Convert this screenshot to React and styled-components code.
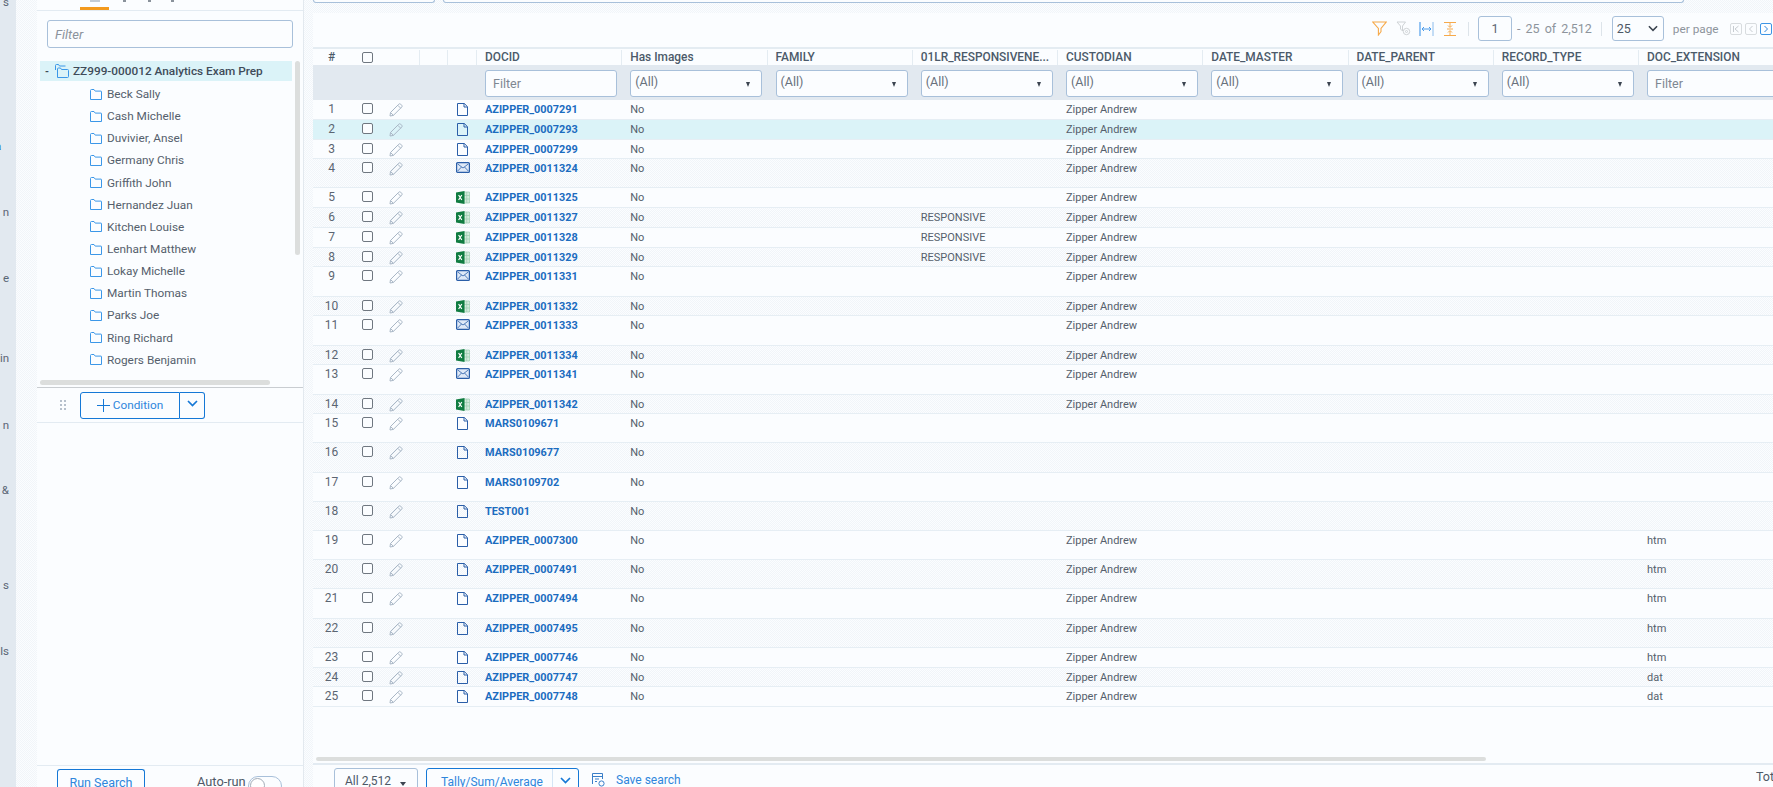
import React from 'react';
import styled, { createGlobalStyle, css } from 'styled-components';

const dither = css`
  background-color: #f7fafc;
  background-image: repeating-conic-gradient(#fbfdff 0 25%, #f1f5f9 0 50%);
  background-size: 2px 2px;
`;

const Global = createGlobalStyle`
  html, body { margin: 0; padding: 0; height: 787px; overflow: hidden; }
  body { font-family: Roboto, "Liberation Sans", sans-serif; color: #4d5866; }
  * { box-sizing: border-box; }
`;

const Page = styled.div`
  ${dither}
  display: flex;
  width: 1773px;
  height: 787px;
  overflow: hidden;
`;

/* ---------- left rail ---------- */
const Rail = styled.nav`
  width: 16px;
  flex: none;
  background: #e2e9f0;
  font-size: 11.5px;
  line-height: 14px;
  overflow: hidden;
`;
const RailLabel = styled.div`
  margin-top: ${p => p.$gap}px;
  width: 9px;
  text-align: ${p => (p.$accent ? 'left' : 'right')};
  text-indent: ${p => (p.$accent ? -5 : 0)}px;
  white-space: nowrap;
  color: ${p => (p.$accent ? '#2b6cb8' : '#5a6675')};
`;

/* ---------- search panel ---------- */
const SearchPanel = styled.aside`
  width: 267px;
  margin-left: 21px;
  flex: none;
  background: #fbfdff;
  border-right: 1px solid #e3e9ef;
  display: flex;
  flex-direction: column;
  overflow: hidden;
`;
const TabStrip = styled.div`
  height: 11px;
  flex: none;
  border-bottom: 1px solid #e3ebf2;
  display: flex;
  padding-left: 43px;
`;
const ActiveTab = styled.div`
  width: 29px;
  height: 10px;
  border-bottom: 3px solid #f39a1e;
  display: flex;
  justify-content: center;
`;
const TabGlyph = styled.span`
  display: block;
  width: ${p => p.$w}px;
  height: 2px;
  margin-left: ${p => p.$ml || 0}px;
  background: ${p => p.$c || '#c3ccd5'};
`;
const FilterWrap = styled.div`
  padding: 9px 10px 13px 10px;
  flex: none;
`;
const TreeFilter = styled.input`
  display: block;
  width: 246px;
  height: 28px;
  border: 1px solid #a8c0da;
  border-radius: 3px;
  background: #fbfdff;
  padding: 0 7px;
  font: italic 13px Roboto, sans-serif;
  &::placeholder { color: #8b939c; opacity: 1; }
`;
const Tree = styled.div`
  position: relative;
  height: 326px;
  flex: none;
  padding-left: 3px;
`;
const RootNode = styled.div`
  display: flex;
  align-items: center;
  width: 252px;
  height: 20px;
  background: #dbf3f8;
  font-size: 11.8px;
  font-weight: 500;
  color: #3f4b59;
  padding-left: 5px;
`;
const Minus = styled.span`
  width: 10px;
  font-weight: 700;
  font-size: 10px;
`;
const RootLabel = styled.span`
  margin-left: 4px;
  white-space: nowrap;
`;
const TreeList = styled.div`
  padding: 2px 0 0 50px;
`;
const TreeNode = styled.div`
  display: flex;
  align-items: center;
  gap: 5px;
  height: 22.15px;
  font-size: 11.8px;
  color: #555f6c;
`;
const VScroll = styled.div`
  position: absolute;
  left: 258px;
  top: 0;
  width: 5px;
  height: 194px;
  border-radius: 3px;
  background: #dcdedd;
`;
const HScroll = styled.div`
  position: absolute;
  left: 3px;
  top: 319px;
  width: 230px;
  height: 5px;
  border-radius: 3px;
  background: #dcdedd;
`;
const ConditionBar = styled.div`
  flex: none;
  height: 36px;
  border-top: 1px solid #c9cdd1;
  border-bottom: 1px solid #e3ebf2;
  display: flex;
  align-items: center;
  padding-left: 22px;
`;
const Grip = styled.div`
  width: 7px;
  height: 12px;
  margin-right: 14px;
  background-image: radial-gradient(circle, #b6c0cc 1.2px, transparent 1.3px);
  background-size: 4px 4px;
`;
const ConditionBtn = styled.button`
  width: 100px;
  height: 27px;
  display: flex;
  align-items: center;
  justify-content: center;
  gap: 3px;
  background: #fbfdff;
  border: 1px solid #1578d6;
  border-radius: 3px 0 0 3px;
  color: #2f86dc;
  font: 11.8px Roboto, sans-serif;
  padding: 0;
`;
const CaretBtn = styled.button`
  width: 25px;
  height: 27px;
  display: flex;
  align-items: center;
  justify-content: center;
  background: #fbfdff;
  border: 1px solid #1578d6;
  border-left: 0;
  border-radius: 0 3px 3px 0;
  padding: 0 0 3px;
`;
const PanelSpacer = styled.div`
  flex: 1;
`;
const PanelFooter = styled.div`
  flex: none;
  height: 22px;
  border-top: 1px solid #e3ebf2;
  display: flex;
  padding: 3px 0 0 20px;
`;
const RunBtn = styled.button`
  width: 88px;
  height: 30px;
  flex: none;
  background: #fbfdff;
  border: 1px solid #1578d6;
  border-bottom-width: 0;
  border-radius: 3px 3px 0 0;
  color: #2f86dc;
  font: 12.5px Roboto, sans-serif;
  padding: 0 0 5px;
`;
const AutoRun = styled.span`
  margin: 5px 0 0 52px;
  font-size: 12.8px;
  white-space: nowrap;
`;
const Toggle = styled.span`
  display: block;
  width: 34px;
  height: 20px;
  margin: 7px 0 0 2px;
  flex: none;
  border: 1px solid #a8c0da;
  border-radius: 10px;
  position: relative;
  &::after {
    content: '';
    position: absolute;
    left: 1px;
    top: 1px;
    width: 13px;
    height: 13px;
    border: 1px solid #a3adb8;
    border-radius: 50%;
    background: #fff;
  }
`;

/* ---------- main ---------- */
const Main = styled.main`
  flex: none;
  width: 1460px;
  margin-left: 9px;
  display: flex;
  flex-direction: column;
`;
const TopInputs = styled.div`
  height: 13px;
  flex: none;
  display: flex;
  gap: 8px;
`;
const CroppedInput = styled.div`
  height: 3px;
  width: ${p => p.$w}px;
  border: 1px solid #a8c0da;
  border-top: 0;
  border-radius: 0 0 3px 3px;
  background: #fbfdff;
`;
const Results = styled.section`
  flex: 1;
  min-height: 0;
  background: #fbfdff;
  display: flex;
  flex-direction: column;
  overflow: hidden;
`;
const Toolbar = styled.div`
  height: 34px;
  flex: none;
  display: flex;
  align-items: center;
  padding: 0 0 3px 1055px;
  white-space: nowrap;
  overflow: hidden;
`;
const ToolIcon = styled.span`
  display: flex;
  flex: none;
  width: 23.5px;
  justify-content: center;
`;
const Divider = styled.span`
  width: 1px;
  height: 14px;
  flex: none;
  background: #dde4ea;
  margin: ${p => p.$m};
`;
const PageInput = styled.div`
  width: 34px;
  height: 25px;
  border: 1px solid #a8c0da;
  border-radius: 3px;
  text-align: center;
  line-height: 23px;
  font-size: 12.5px;
  color: #5c6673;
  flex: none;
`;
const PagerText = styled.span`
  flex: none;
  font-size: ${p => p.$size || 12.5}px;
  color: #8d949c;
  margin: ${p => p.$m || '0'};
  word-spacing: ${p => (p.$tight ? 0 : 2)}px;
`;
const PerPage = styled.div`
  width: 52px;
  height: 25px;
  border: 1px solid #a8c0da;
  border-radius: 3px;
  display: flex;
  align-items: center;
  justify-content: space-between;
  padding: 0 5px 0 4px;
  font-size: 12.5px;
  color: #4d5866;
  flex: none;
`;
const PageBtn = styled.span`
  width: 12px;
  height: 12px;
  margin-left: ${p => p.$ml}px;
  flex: none;
  border: 1px solid ${p => (p.$on ? '#3c95e6' : '#d8dcdf')};
  border-radius: 2px;
  display: flex;
  align-items: center;
  justify-content: center;
`;

const Table = styled.div`
  flex: 1;
  min-height: 0;
  width: 1460px;
  overflow: hidden;
  border-top: 2px solid #e4ecf2;
`;
const cols = (a, b, c, d, e) => `${a}px ${b}px ${c}px ${d}px ${e}px repeat(9, 145.25px)`;
const HeadRow = styled.div`
  display: grid;
  grid-template-columns: ${cols(37, 34, 36, 28, 29)};
  height: 16px;
  font-size: 11.9px;
  font-weight: 500;
  color: #4b5a6a;
  line-height: 15px;
  padding-top: 1px;
`;
const HeadCell = styled.div`
  padding-left: ${p => (p.$center || p.$box ? 0 : 8)}px;
  text-align: ${p => (p.$center ? 'center' : 'left')};
  border-right: ${p => (p.$sep ? '1px solid #e4ecf2' : '0')};
  white-space: nowrap;
  overflow: hidden;
  display: ${p => (p.$box ? 'flex' : 'block')};
  align-items: center;
  justify-content: center;
`;
const FilterRow = styled.div`
  display: grid;
  grid-template-columns: 164px repeat(9, 145.25px);
  height: 35px;
  background: #e2e9f0;
  align-items: start;
  padding-top: 5px;
`;
const controlBox = css`
  width: 132px;
  height: 27px;
  margin-left: 8px;
  border: 1px solid #a8c0da;
  border-radius: 3px;
  background: #fbfdff;
  font-size: 12.5px;
`;
const FilterInput = styled.input`
  ${controlBox}
  display: block;
  padding: 0 7px;
  font-family: Roboto, sans-serif;
  &::placeholder { color: #7e8791; opacity: 1; }
`;
const FilterSelect = styled.div`
  ${controlBox}
  position: relative;
  padding: 0 4px;
  line-height: 22px;
  color: #68717c;
  &::after {
    content: '';
    position: absolute;
    right: 11px;
    top: 11px;
    border-left: 2.5px solid transparent;
    border-right: 2.5px solid transparent;
    border-top: 5px solid #3b4450;
  }
`;
const Row = styled.div`
  display: grid;
  grid-template-columns: ${cols(37, 34, 24, 40, 29)};
  height: ${p => (p.$tall ? 29.2 : 19.75)}px;
  border-bottom: 1px solid #e6eef4;
  font-size: 11px;
  line-height: 19.5px;
  color: #555f6c;
  ${p => (p.$selected ? 'background: #dbf3f8;' : p.$even ? dither : 'background: #fbfdff;')}
`;
const NumCell = styled.div`
  text-align: center;
  font-size: 12px;
  line-height: 18px;
  color: #5b6572;
`;
const IconCell = styled.div`
  display: flex;
  justify-content: center;
  align-items: flex-start;
  padding-top: 3px;
`;
const DataCell = styled.div`
  padding-left: 8px;
  white-space: nowrap;
`;
const DocLink = styled(DataCell)`
  font-weight: 700;
  color: #1b6cbf;
  font-size: 10.9px;
`;
const RowCheck = styled.span`
  display: block;
  width: 11px;
  height: 11px;
  border: 1px solid #6f7780;
  border-radius: 2px;
  background: #fbfdff;
`;
const HBar = styled.div`
  height: 4px;
  flex: none;
  width: 1170px;
  margin: 0 0 2px 3px;
  border-radius: 2px;
  background: #dcdedd;
`;
const ResultsFooter = styled.div`
  flex: none;
  height: 24px;
  border-top: 2px solid #e3ebf2;
  display: flex;
  align-items: flex-start;
  padding: 3px 0 0 21px;
  overflow: hidden;
  position: relative;
`;
const AllBtn = styled.div`
  width: 84px;
  height: 28px;
  flex: none;
  border: 1px solid #a8c0da;
  border-radius: 3px;
  display: flex;
  padding: 5px 0 0 10px;
  font-size: 12px;
  color: #4d5866;
  white-space: nowrap;
`;
const Triangle = styled.span`
  margin: 8px 0 0 9px;
  border-left: 3.5px solid transparent;
  border-right: 3.5px solid transparent;
  border-top: 4px solid #3b4450;
  height: 0;
`;
const TallyBtn = styled.div`
  width: 153px;
  height: 28px;
  flex: none;
  margin-left: 8px;
  border: 1px solid #1578d6;
  border-radius: 3px;
  display: flex;
  font-size: 12px;
  color: #2f86dc;
`;
const TallyLabel = styled.span`
  flex: 1;
  padding: 6px 0 0 14px;
  white-space: nowrap;
`;
const TallyCaret = styled.span`
  width: 26px;
  flex: none;
  display: flex;
  justify-content: center;
  padding-top: 8px;
  border-left: 1px solid #d4e5f5;
`;
const SaveLink = styled.div`
  display: flex;
  margin-left: 13px;
  gap: 11px;
  font-size: 12px;
  color: #2f86dc;
  padding-top: 5px;
  white-space: nowrap;
`;
const TotalLabel = styled.span`
  position: absolute;
  left: 1443px;
  top: 4px;
  font-size: 12.5px;
  color: #4d5866;
`;

/* ---------- drawings ---------- */
const FolderIcon = () => (
  <svg width="12" height="11" viewBox="0 0 12 11" fill="none" stroke="#3b97e8" strokeWidth="1">
    <path d="M.5 10.5V1.5a1 1 0 0 1 1-1h2.5l1.2 1.6h5.8a.5.5 0 0 1 .5.5v7.9z" />
  </svg>
);
const RootFolder = () => (
  <svg width="14" height="14" viewBox="0 0 14 14" fill="none" stroke="#3b97e8" strokeWidth="1">
    <path d="M.5 6V1.5a1 1 0 0 1 1-1h2l1 1.5h6" />
    <path d="M2.5 13.5V5a1 1 0 0 1 1-1h2l1 1.5h6a1 1 0 0 1 1 1v6a1 1 0 0 1-1 1z" />
  </svg>
);
const Pencil = () => (
  <svg width="14" height="14" viewBox="0 0 14 14" fill="none" stroke="#a9b7c6" strokeWidth="1">
    <path d="M1.5 9.5 9.8 1.2a1.3 1.3 0 0 1 1.9 0l1 1a1.3 1.3 0 0 1 0 1.9L4.4 12.4 1 13z" />
    <path d="M1.5 9.5l3 2.9M8.8 2.3l2.9 2.9" />
  </svg>
);
const DocIcon = () => (
  <svg width="11" height="13" viewBox="0 0 11 13" fill="none" stroke="#2a5ea8" strokeWidth="1">
    <path d="M.5.5h6.8l3.2 3.2v8.8H.5z" />
    <path d="M7 .5v3.5h3.5" />
  </svg>
);
const MailIcon = () => (
  <svg width="14" height="11" viewBox="0 0 14 11" fill="#dfe9f7" stroke="#2a5ea8">
    <rect x=".6" y=".6" width="12.8" height="9.8" rx="1" strokeWidth="1.2" />
    <path d="M1.5 1.8 7 6l5.5-4.2M1.5 9.2 5.5 5M12.5 9.2 8.5 5" fill="none" strokeWidth=".8" />
  </svg>
);
const ExcelIcon = () => (
  <svg width="14" height="13" viewBox="0 0 14 13">
    <path d="M8 1h5.5v11H8z" fill="#d4ebdd" stroke="#9ccdb0" strokeWidth=".7" />
    <path d="M8 4.5h5.5M8 8h5.5M10.7 1v11" stroke="#9ccdb0" strokeWidth=".7" />
    <path d="M0 1.4 8.5 0v13L0 11.6z" fill="#107c41" />
    <path d="M2.6 4 5.8 9M5.8 4 2.6 9" stroke="#fff" strokeWidth="1.2" />
  </svg>
);
const Chevron = ({ color = '#1578d6', w = 11 }) => (
  <svg width={w} height="7" viewBox="0 0 11 7" fill="none" stroke={color} strokeWidth="1.7">
    <path d="M1 1l4.5 4.5L10 1" />
  </svg>
);
const Plus = () => (
  <svg width="13" height="13" viewBox="0 0 13 13" stroke="#1578d6" strokeWidth="1">
    <path d="M6.5 0v13M0 6.5h13" />
  </svg>
);
const FunnelOn = () => (
  <svg width="15" height="15" viewBox="0 0 15 15" fill="none" stroke="#f6a94a" strokeWidth="1.1">
    <path d="M.8 1h13.4L9 7.4v3.2l-2.6 3.4V7.4z" />
  </svg>
);
const FunnelOff = () => (
  <svg width="15" height="15" viewBox="0 0 15 15" fill="none" stroke="#cfd3d6" strokeWidth="1">
    <path d="M1 1h8.5L6.5 5v5L4.5 8V5z" />
    <circle cx="10.5" cy="10.5" r="3.2" />
    <circle cx="10.5" cy="10.5" r="1" />
  </svg>
);
const FitWidth = () => (
  <svg width="15" height="14" viewBox="0 0 15 14" fill="none">
    <path d="M1 0v14" stroke="#2f8be6" strokeWidth="1" />
    <path d="M14 0v14" stroke="#8cbcec" strokeWidth="1" />
    <path d="M3 7h9M5 5 3 7l2 2M10 5l2 2-2 2" stroke="#4a9bea" strokeWidth="1" />
  </svg>
);
const FitHeight = () => (
  <svg width="14" height="14" viewBox="0 0 14 14" fill="none" stroke="#f6a94a" strokeWidth="1">
    <path d="M1 .5h12M1 13.5h12M7 1v4M5 3.5 7 5.5l2-2M7 13V9M5 10.5l2-2 2 2M4 7h6" />
  </svg>
);
const PagerGlyph = ({ d, color = '#c7ccd1' }) => (
  <svg width="8" height="8" viewBox="0 0 8 8" fill="none" stroke={color} strokeWidth="1">
    <path d={d} />
  </svg>
);
const SaveIcon = () => (
  <svg width="13" height="14" viewBox="0 0 13 14" fill="none" stroke="#3a7fc8" strokeWidth="1">
    <path d="M.5 11V.5h10V6M.5 3.5h10M3 6h4M3 8.5h2" />
    <circle cx="9.5" cy="10.5" r="2.6" fill="#fbfdff" />
  </svg>
);

/* ---------- data ---------- */
const people = [
  'Beck Sally', 'Cash Michelle', 'Duvivier, Ansel', 'Germany Chris', 'Griffith John',
  'Hernandez Juan', 'Kitchen Louise', 'Lenhart Matthew', 'Lokay Michelle', 'Martin Thomas',
  'Parks Joe', 'Ring Richard', 'Rogers Benjamin',
];
const headers = ['DOCID', 'Has Images', 'FAMILY', '01LR_RESPONSIVENE...', 'CUSTODIAN', 'DATE_MASTER', 'DATE_PARENT', 'RECORD_TYPE', 'DOC_EXTENSION'];
const filterKinds = ['input', 'select', 'select', 'select', 'select', 'select', 'select', 'select', 'input'];
const Z = 'Zipper Andrew';
const rows = [
  ['AZIPPER_0007291', 'doc', 0, '', Z, ''],
  ['AZIPPER_0007293', 'doc', 0, '', Z, ''],
  ['AZIPPER_0007299', 'doc', 0, '', Z, ''],
  ['AZIPPER_0011324', 'mail', 1, '', Z, ''],
  ['AZIPPER_0011325', 'xls', 0, '', Z, ''],
  ['AZIPPER_0011327', 'xls', 0, 'RESPONSIVE', Z, ''],
  ['AZIPPER_0011328', 'xls', 0, 'RESPONSIVE', Z, ''],
  ['AZIPPER_0011329', 'xls', 0, 'RESPONSIVE', Z, ''],
  ['AZIPPER_0011331', 'mail', 1, '', Z, ''],
  ['AZIPPER_0011332', 'xls', 0, '', Z, ''],
  ['AZIPPER_0011333', 'mail', 1, '', Z, ''],
  ['AZIPPER_0011334', 'xls', 0, '', Z, ''],
  ['AZIPPER_0011341', 'mail', 1, '', Z, ''],
  ['AZIPPER_0011342', 'xls', 0, '', Z, ''],
  ['MARS0109671', 'doc', 1, '', '', ''],
  ['MARS0109677', 'doc', 1, '', '', ''],
  ['MARS0109702', 'doc', 1, '', '', ''],
  ['TEST001', 'doc', 1, '', '', ''],
  ['AZIPPER_0007300', 'doc', 1, '', Z, 'htm'],
  ['AZIPPER_0007491', 'doc', 1, '', Z, 'htm'],
  ['AZIPPER_0007494', 'doc', 1, '', Z, 'htm'],
  ['AZIPPER_0007495', 'doc', 1, '', Z, 'htm'],
  ['AZIPPER_0007746', 'doc', 0, '', Z, 'htm'],
  ['AZIPPER_0007747', 'doc', 0, '', Z, 'dat'],
  ['AZIPPER_0007748', 'doc', 0, '', Z, 'dat'],
];
const railLabels = [
  ['s', -5], ['a', 130, true], ['n', 52], ['e', 52], ['in', 66], ['n', 53], ['&', 51], ['s', 81], ['ls', 52],
];
const typeIcon = { doc: <DocIcon />, mail: <MailIcon />, xls: <ExcelIcon /> };

export default function App() {
  return (
    <Page>
      <Global />
      <Rail>
        {railLabels.map(([t, g, a], i) => (
          <RailLabel key={i} $gap={g} $accent={a}>{t}</RailLabel>
        ))}
      </Rail>

      <SearchPanel>
        <TabStrip>
          <ActiveTab><TabGlyph $w={10} /></ActiveTab>
          <TabGlyph $w={3} $ml={14} $c="#8a929b" />
          <TabGlyph $w={3} $ml={22} $c="#8a929b" />
          <TabGlyph $w={3} $ml={20} $c="#8a929b" />
        </TabStrip>
        <FilterWrap><TreeFilter placeholder="Filter" /></FilterWrap>
        <Tree>
          <RootNode>
            <Minus>-</Minus>
            <RootFolder />
            <RootLabel>ZZ999-000012 Analytics Exam Prep</RootLabel>
          </RootNode>
          <TreeList>
            {people.map(n => (
              <TreeNode key={n}><FolderIcon />{n}</TreeNode>
            ))}
          </TreeList>
          <VScroll />
          <HScroll />
        </Tree>
        <ConditionBar>
          <Grip />
          <ConditionBtn><Plus />Condition</ConditionBtn>
          <CaretBtn><Chevron /></CaretBtn>
        </ConditionBar>
        <PanelSpacer />
        <PanelFooter>
          <RunBtn>Run Search</RunBtn>
          <AutoRun>Auto-run</AutoRun>
          <Toggle />
        </PanelFooter>
      </SearchPanel>

      <Main>
        <TopInputs>
          <CroppedInput $w={122} />
          <CroppedInput $w={1241} />
        </TopInputs>
        <Results>
          <Toolbar>
            <ToolIcon><FunnelOn /></ToolIcon>
            <ToolIcon><FunnelOff /></ToolIcon>
            <ToolIcon><FitWidth /></ToolIcon>
            <ToolIcon><FitHeight /></ToolIcon>
            <Divider $m="0 9px 0 6px" />
            <PageInput>1</PageInput>
            <PagerText $m="0 0 0 5px">- 25 of 2,512</PagerText>
            <Divider $m="0 10px 0 9px" />
            <PerPage>25<Chevron color="#3b4450" w={10} /></PerPage>
            <PagerText $m="0 0 0 9px" $size={11.8} $tight>per page</PagerText>
            <PageBtn $ml={11}><PagerGlyph d="M1.5 1v6M6.5 1 3 4l3.5 3" /></PageBtn>
            <PageBtn $ml={3}><PagerGlyph d="M5.5 1 2.5 4l3 3" /></PageBtn>
            <PageBtn $ml={3} $on><PagerGlyph d="M2.5 1l3 3-3 3" color="#2f86dc" /></PageBtn>
            <PageBtn $ml={3} $on><PagerGlyph d="M1.5 1 5 4 1.5 7M6.5 1v6" color="#2f86dc" /></PageBtn>
          </Toolbar>
          <Table>
            <HeadRow>
              <HeadCell $center>#</HeadCell>
              <HeadCell $box><RowCheck /></HeadCell>
              <HeadCell $sep />
              <HeadCell $sep />
              <HeadCell $sep />
              {headers.map(h => <HeadCell key={h} $sep>{h}</HeadCell>)}
            </HeadRow>
            <FilterRow>
              <span />
              {filterKinds.map((k, i) =>
                k === 'input'
                  ? <FilterInput key={i} placeholder="Filter" />
                  : <FilterSelect key={i}>(All)</FilterSelect>
              )}
            </FilterRow>
            {rows.map(([id, icon, tall, resp, cust, ext], i) => (
              <Row key={id} $tall={tall} $even={i % 2 === 1} $selected={i === 1}>
                <NumCell>{i + 1}</NumCell>
                <IconCell><RowCheck /></IconCell>
                <IconCell><Pencil /></IconCell>
                <span />
                <IconCell>{typeIcon[icon]}</IconCell>
                <DocLink>{id}</DocLink>
                <DataCell>No</DataCell>
                <DataCell />
                <DataCell>{resp}</DataCell>
                <DataCell>{cust}</DataCell>
                <DataCell />
                <DataCell />
                <DataCell />
                <DataCell>{ext}</DataCell>
              </Row>
            ))}
          </Table>
          <HBar />
          <ResultsFooter>
            <AllBtn>All 2,512<Triangle /></AllBtn>
            <TallyBtn>
              <TallyLabel>Tally/Sum/Average</TallyLabel>
              <TallyCaret><Chevron /></TallyCaret>
            </TallyBtn>
            <SaveLink><SaveIcon />Save search</SaveLink>
            <TotalLabel>Tot</TotalLabel>
          </ResultsFooter>
        </Results>
      </Main>
    </Page>
  );
}
